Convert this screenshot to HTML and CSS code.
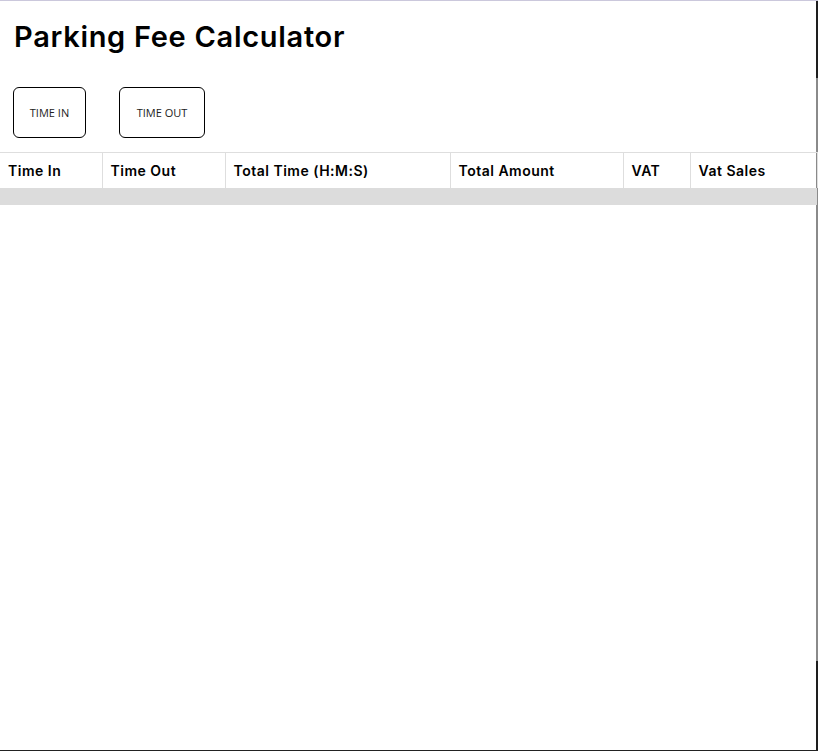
FILE: index.html
```html
<!DOCTYPE html>
<html lang="en">
<head>
<meta charset="utf-8">
<title>Parking Fee Calculator</title>
<link rel="stylesheet" href="styles.css">
</head>
<body>
  <main class="app">
    <h1 class="title">Parking Fee Calculator</h1>
    <div class="actions">
      <button class="btn btn-in" type="button">TIME IN</button>
      <button class="btn btn-out" type="button">TIME OUT</button>
    </div>
    <table class="log">
      <colgroup>
        <col class="c1"><col class="c2"><col class="c3"><col class="c4"><col class="c5"><col class="c6">
      </colgroup>
      <thead>
        <tr>
          <th>Time In</th>
          <th>Time Out</th>
          <th>Total Time (H:M:S)</th>
          <th>Total Amount</th>
          <th>VAT</th>
          <th>Vat Sales</th>
        </tr>
      </thead>
      <tbody>
        <tr class="empty"><td colspan="6"></td></tr>
      </tbody>
    </table>
  </main>
</body>
</html>
```

FILE: styles.css
```css
html, body {
  margin: 0;
  padding: 0;
  height: 100%;
}
body {
  box-sizing: border-box;
  height: 751px;
  font-family: Inter, "Noto Sans", sans-serif;
  color: #000;
  background:
    linear-gradient(#cbc8dc, #cbc8dc) left top / 100% 1px no-repeat,
    linear-gradient(#222, #222) left bottom / 100% 1px no-repeat,
    linear-gradient(to bottom, #1e1e1e 78px, #8a8a8a 78px, #8a8a8a 661px, #1e1e1e 661px) right top / 2px 100% no-repeat,
    #fff;
}
.app {
  padding-top: 1px;
  width: 816px;
}
.title {
  margin: 0;
  padding: 16px 0 0 14px;
  height: 50px;
  box-sizing: border-box;
  font-size: 29px;
  line-height: 40px;
  font-weight: 600;
  letter-spacing: 0.7px;
}
.actions {
  display: flex;
  gap: 33px;
  padding: 36px 0 0 13px;
}
.btn {
  height: 51px;
  box-sizing: border-box;
  border: 1px solid #000;
  border-radius: 6px;
  background: #fff;
  font-family: "Open Sans", sans-serif;
  font-size: 11px;
  font-weight: 400;
  color: #222;
  padding: 0;
}
.btn-in { width: 73px; }
.btn-out { width: 86px; }
.log {
  margin-top: 14px;
  width: 817px;
  border-collapse: collapse;
  table-layout: fixed;
}
.c1 { width: 102px; }
.c2 { width: 123px; }
.c3 { width: 225px; }
.c4 { width: 173px; }
.c5 { width: 67px; }
.c6 { width: 127px; }
.log th {
  height: 35px;
  box-sizing: border-box;
  padding: 0 0 0 8px;
  text-align: left;
  font-size: 14px;
  font-weight: 600;
  letter-spacing: 0.5px;
  border: 1px solid #dedede;
  border-bottom: 0;
}
.log th:first-child { border-left: 0; }
.empty td {
  height: 17px;
  padding: 0;
  background: #dcdcdc;
}
```
